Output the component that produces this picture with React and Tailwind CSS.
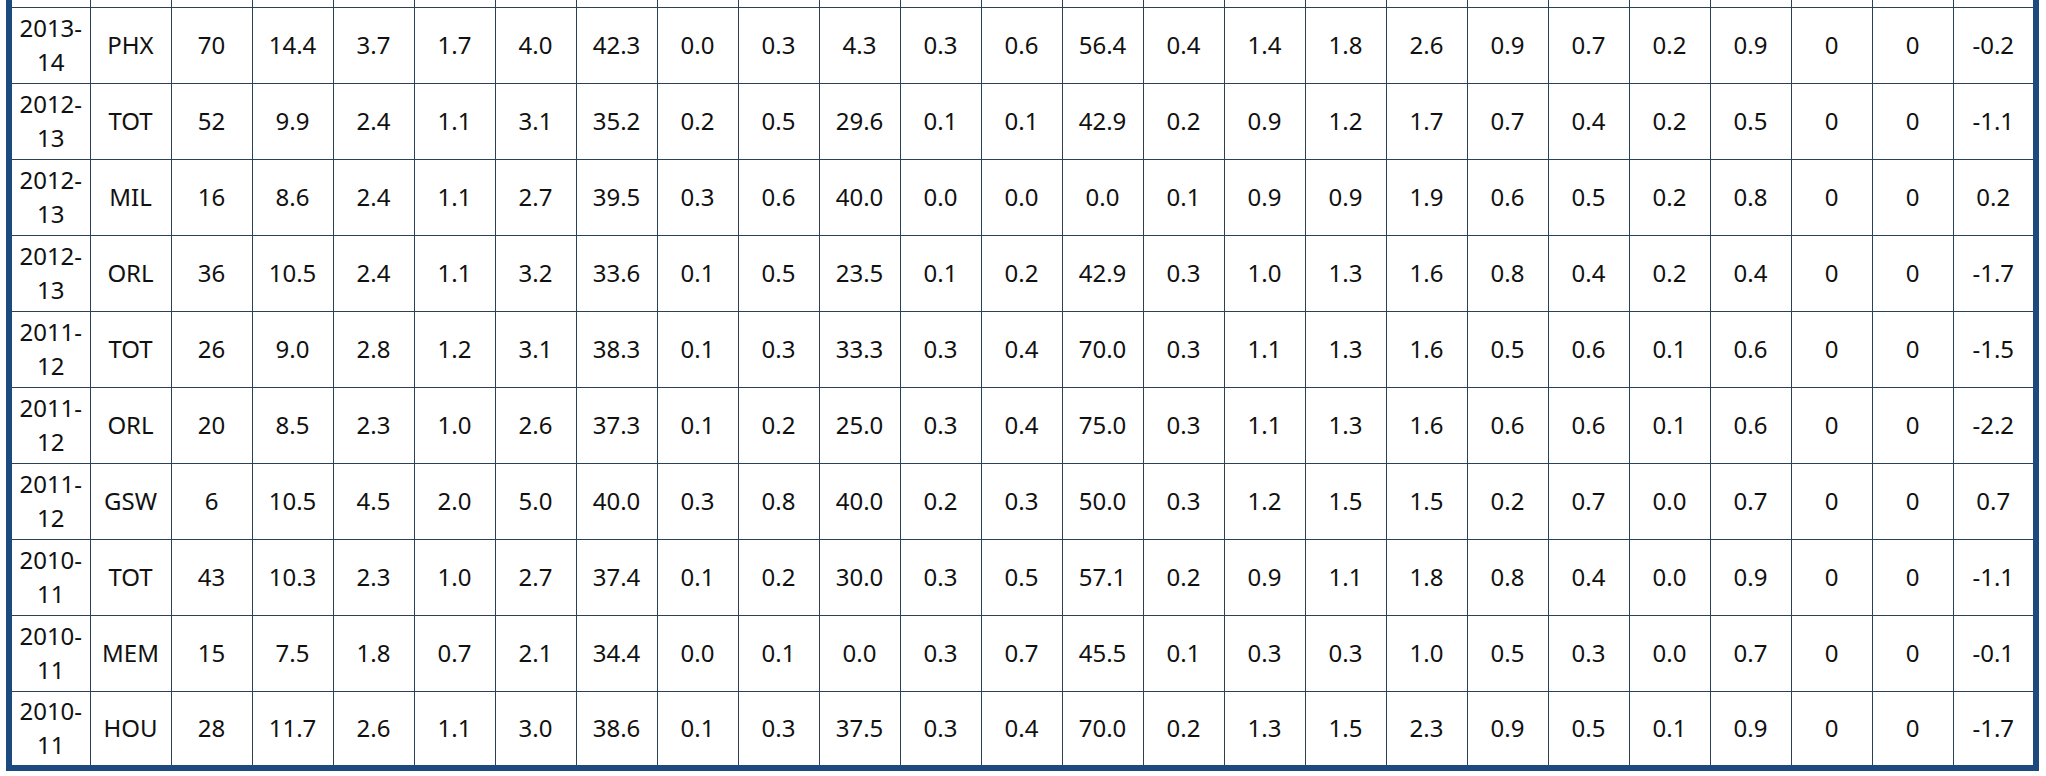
import React from "react";

const rows = [
  ["2013-14","PHX","70","14.4","3.7","1.7","4.0","42.3","0.0","0.3","4.3","0.3","0.6","56.4","0.4","1.4","1.8","2.6","0.9","0.7","0.2","0.9","0","0","-0.2"],
  ["2012-13","TOT","52","9.9","2.4","1.1","3.1","35.2","0.2","0.5","29.6","0.1","0.1","42.9","0.2","0.9","1.2","1.7","0.7","0.4","0.2","0.5","0","0","-1.1"],
  ["2012-13","MIL","16","8.6","2.4","1.1","2.7","39.5","0.3","0.6","40.0","0.0","0.0","0.0","0.1","0.9","0.9","1.9","0.6","0.5","0.2","0.8","0","0","0.2"],
  ["2012-13","ORL","36","10.5","2.4","1.1","3.2","33.6","0.1","0.5","23.5","0.1","0.2","42.9","0.3","1.0","1.3","1.6","0.8","0.4","0.2","0.4","0","0","-1.7"],
  ["2011-12","TOT","26","9.0","2.8","1.2","3.1","38.3","0.1","0.3","33.3","0.3","0.4","70.0","0.3","1.1","1.3","1.6","0.5","0.6","0.1","0.6","0","0","-1.5"],
  ["2011-12","ORL","20","8.5","2.3","1.0","2.6","37.3","0.1","0.2","25.0","0.3","0.4","75.0","0.3","1.1","1.3","1.6","0.6","0.6","0.1","0.6","0","0","-2.2"],
  ["2011-12","GSW","6","10.5","4.5","2.0","5.0","40.0","0.3","0.8","40.0","0.2","0.3","50.0","0.3","1.2","1.5","1.5","0.2","0.7","0.0","0.7","0","0","0.7"],
  ["2010-11","TOT","43","10.3","2.3","1.0","2.7","37.4","0.1","0.2","30.0","0.3","0.5","57.1","0.2","0.9","1.1","1.8","0.8","0.4","0.0","0.9","0","0","-1.1"],
  ["2010-11","MEM","15","7.5","1.8","0.7","2.1","34.4","0.0","0.1","0.0","0.3","0.7","45.5","0.1","0.3","0.3","1.0","0.5","0.3","0.0","0.7","0","0","-0.1"],
  ["2010-11","HOU","28","11.7","2.6","1.1","3.0","38.6","0.1","0.3","37.5","0.3","0.4","70.0","0.2","1.3","1.5","2.3","0.9","0.5","0.1","0.9","0","0","-1.7"],
];

export default function App() {
  return (
    <div className="w-[2046px] h-[776px] overflow-hidden bg-white" style={{ fontFamily: '"Noto Sans", "Open Sans", sans-serif' }}>
      <div className="ml-[6px] w-[2033px] border-x-[6px] border-b-[6px] border-[#1c4a7e]">
        <table className="w-full table-fixed border-collapse border-hidden text-[24px] leading-[34px] text-[#111]">
          <colgroup>
            <col className="w-[78px]" />
            {Array.from({ length: 23 }).map((_, i) => (
              <col key={i} className="w-[81px]" />
            ))}
            <col />
          </colgroup>
          <tbody>
            <tr className="h-[7px]">
              {Array.from({ length: 25 }).map((_, i) => (
                <td key={i} className="p-0 border border-[#2a4158]"></td>
              ))}
            </tr>
            {rows.map((r, ri) => (
              <tr key={ri} className={ri === rows.length - 1 ? "h-[74px]" : "h-[76px]"}>
                {r.map((c, ci) => (
                  <td key={ci} className="p-0 text-center align-middle border border-[#2a4158]">
                    {ci === 0 ? (
                      <span className="block">
                        {c.slice(0, 5)}
                        <br />
                        {c.slice(5)}
                      </span>
                    ) : (
                      c
                    )}
                  </td>
                ))}
              </tr>
            ))}
          </tbody>
        </table>
      </div>
    </div>
  );
}
